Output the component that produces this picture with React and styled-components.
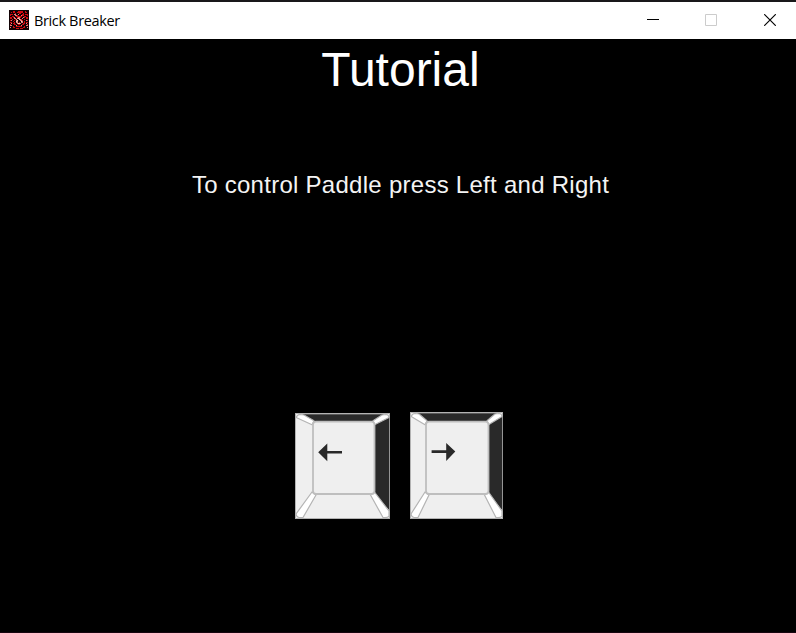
import React from "react";
import styled, { createGlobalStyle } from "styled-components";

const GlobalStyle = createGlobalStyle`
  html, body { margin: 0; background: #000; overflow: hidden; }
`;

const Window = styled.main`
  box-sizing: border-box;
  display: flex;
  flex-direction: column;
  width: 796px;
  height: 633px;
  background: #000;
  border-top: 2px solid #19181a;
  border-bottom: 1px solid #16050f;
`;

const TitleBar = styled.header`
  display: flex;
  align-items: center;
  height: 37px;
  padding-left: 9px;
  background: #fff;
`;

const AppIcon = styled.svg`
  display: block;
  width: 20px;
  height: 20px;
  margin-top: -1px;
`;

const WindowName = styled.span`
  flex: 1;
  margin: 1px 0 0 5px;
  font: 14.5px/20px "Open Sans", "Noto Sans", sans-serif;
  letter-spacing: ${(p) => p.$tracking}px;
  color: #000;
`;

const WindowButton = styled.button`
  box-sizing: border-box;
  display: flex;
  align-items: center;
  justify-content: center;
  align-self: flex-start;
  width: ${(p) => p.$width}px;
  height: 36px;
  padding: 0 0 0 ${(p) => p.$inset || 0}px;
  border: 0;
  background: transparent;
`;

const ButtonGlyph = styled.svg`
  display: block;
  width: 12px;
  height: 12px;
  fill: none;
  stroke: ${(p) => p.$color};
`;

const Stage = styled.section`
  display: flex;
  flex-direction: column;
  align-items: center;
  flex: 1;
  font-family: "Liberation Sans", Arial, sans-serif;
  color: #fff;
`;

const Heading = styled.h1`
  margin: 3px 0 0 5px;
  font-size: 48px;
  font-weight: 400;
  line-height: 56px;
  letter-spacing: 0;
`;

const Instruction = styled.p`
  margin: 73px 0 0 5px;
  font-size: 24px;
  line-height: 28px;
  letter-spacing: 0.27px;
  color: #f4f4f4;
  white-space: nowrap;
`;

const Keys = styled.div`
  display: flex;
  align-items: flex-end;
  gap: 20px;
  margin: 213px 0 0 2px;
`;

const KeyCap = styled.svg`
  display: block;
  width: ${(p) => p.$w}px;
  height: ${(p) => p.$h}px;
`;

const ICON_ROWS = [
  "kkkkkkkkkkkkkkkkkkkk",
  "kkkkrrkkkrrrrrkkrkkk",
  "kkrkrrkkrrrrrrkkrrkk",
  "kkkkkkrkkkrrkkrkkkkk",
  "krrrkppkkpkkkrrkrrrk",
  "krkkkkpprkkkprrkkkrk",
  "kkkrrkkrrrrrrkkrrkkk",
  "krrkrpkkrpprkkprkrrk",
  "krrkkppkpwpkkpkkkrrk",
  "kkkrkkrpkkwprkkrkkkk",
  "krpkkrkpwkkpprkkkprk",
  "kkkkrkkwpkkkwpkrkkkk",
  "krrkkrkppkrkppkrkrrk",
  "kkpkrrkkpwwpkkrrkpkk",
  "krkkkrrkkrrkkrrkkkrk",
  "kppkkkkpkkkkpkkkkppk",
  "kkkkrkkrrrrrrkkrkkkk",
  "kpkkrrkkkkkkkkrrkkpk",
  "kkkkkkkrrrkrrrkkkkkk",
  "kkkkkkkkkkkkkkkkkkkk",
];
const ICON_COLORS = { k: "#120204", r: "#d20810", p: "#e97f7b", w: "#f3d2bd" };

function BrickIcon() {
  return (
    <AppIcon viewBox="0 0 20 20" shapeRendering="crispEdges" aria-hidden="true">
      {ICON_ROWS.flatMap((row, y) =>
        [...row].map((c, x) => (
          <rect key={`${x}-${y}`} x={x} y={y} width="1" height="1" fill={ICON_COLORS[c]} />
        ))
      )}
    </AppIcon>
  );
}

function ArrowKey({ w, h, l, r, t, b, arrow, label }) {
  return (
    <KeyCap $w={w} $h={h} viewBox={`0 0 ${w} ${h}`} role="img" aria-label={label}>
      <rect width={w} height={h} fill="#efefef" />
      <path d={`M7 1.3H${w - 6}L${r} ${t}H${l}Z`} fill="#292929" />
      <path d={`M${r} ${t}L${w} 4V${h - 8}L${r} ${b}Z`} fill="#292929" />
      <rect x=".5" y=".5" width={w - 1} height={h - 1} fill="none" stroke="#a8a8a8" strokeOpacity=".85" />
      <g fill="#fff" stroke="#b4b4b4" strokeWidth="1.2" strokeLinejoin="round">
        <path d={`M1.2 4.5Q2 1.8 5 1.5L9 2L${l + 1} ${t - 1}L${l - 1} ${t + 3}Z`} />
        <path d={`M${w - 1} 4.5Q${w - 1} 1.8 ${w - 4} 1.5L${w - 8} 2L${r - 1.5} ${t - 1}L${r} ${t + 3}Z`} />
        <path d={`M${l - 1} ${b - 2}L${l + 3} ${b + 1}L8 ${h - 1.5}H4Q1.5 ${h - 2} 1 ${h - 5}Z`} />
        <path d={`M${r} ${b - 2}L${w - 1} ${h - 8}V${h - 3}Q${w - 2} ${h - 1} ${w - 7} ${h - 1.5}L${r - 4} ${b + 1}Z`} />
      </g>
      <rect x={l} y={t} width={r - l} height={b - t} rx="3" fill="#efefef" stroke="#bebebe" strokeWidth="1.8" />
      <path d={arrow} fill="#292929" />
    </KeyCap>
  );
}

export default function App() {
  return (
    <>
      <GlobalStyle />
      <Window>
        <TitleBar>
          <BrickIcon />
          <WindowName $tracking={-0.36}>Brick Breaker</WindowName>
          <WindowButton $width={58} aria-label="Minimize">
            <ButtonGlyph viewBox="0 0 12 12" $color="#000"><path d="M0 5.5h12" /></ButtonGlyph>
          </WindowButton>
          <WindowButton $width={58} aria-label="Maximize">
            <ButtonGlyph viewBox="0 0 12 12" $color="#ccc"><path d="M.5.5h11v11H.5z" /></ButtonGlyph>
          </WindowButton>
          <WindowButton $width={56} $inset={4} aria-label="Close">
            <ButtonGlyph viewBox="0 0 12 12" $color="#000"><path d="M.2.2l11.6 11.6M11.8.2L.2 11.8" strokeWidth="1.15" /></ButtonGlyph>
          </WindowButton>
        </TitleBar>
        <Stage>
          <Heading>Tutorial</Heading>
          <Instruction>To control Paddle press Left and Right</Instruction>
          <Keys>
            <ArrowKey
              label="Left" w={95} h={106} l={18} r={79.5} t={8.7} b={81}
              arrow="M23.2 39.3L32.3 30.5V38H47V40.6H32.3V48.3Z"
            />
            <ArrowKey
              label="Right" w={93} h={107} l={16} r={78.5} t={9.7} b={82}
              arrow="M45.3 39.6L36.2 31V38.3H21.6V40.9H36.2V49Z"
            />
          </Keys>
        </Stage>
      </Window>
    </>
  );
}
